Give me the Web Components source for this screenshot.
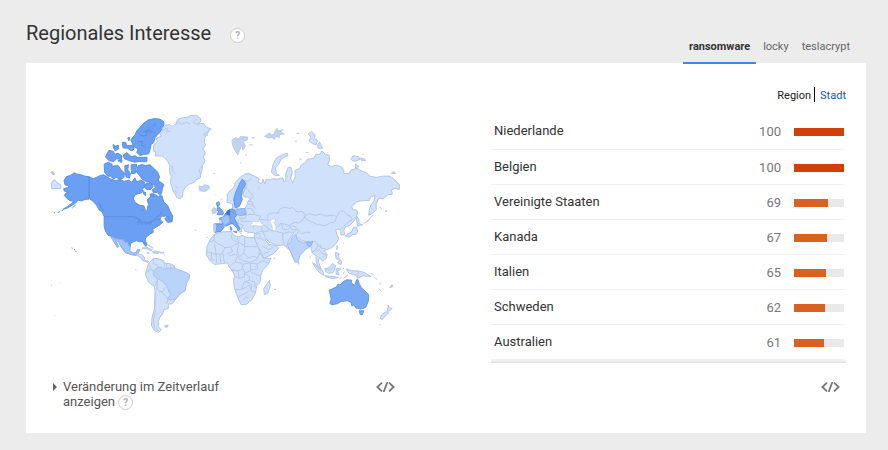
<!DOCTYPE html>
<html lang="de">
<head>
<meta charset="utf-8">
<title>Regionales Interesse</title>
<style>
body{margin:0;background:#ececec;font-family:Roboto,"Liberation Sans",sans-serif;color:#333}
</style>
</head>
<body>
<interest-panel>
  <span slot="title">Regionales Interesse</span>
  <term-tabs slot="tabs" terms="ransomware,locky,teslacrypt"></term-tabs>
  <world-map slot="map"></world-map>
  <timeline-toggle slot="map-tools">Veränderung im Zeitverlauf anzeigen</timeline-toggle>
  <embed-button slot="map-tools"></embed-button>
  <level-switch slot="list"></level-switch>
  <region-table slot="list" rows="Niederlande:100,Belgien:100,Vereinigte Staaten:69,Kanada:67,Italien:65,Schweden:62,Australien:61"></region-table>
  <embed-button slot="list-tools"></embed-button>
</interest-panel>

<template id="panel">
<style>
:host{display:block;padding:0 22px 17px 26px}
header{display:flex;justify-content:space-between;height:64px;margin-bottom:-1px}
.head{display:flex;align-items:center;gap:19px;height:66px}
h2{margin:0;font-size:20px;line-height:24px;font-weight:400;color:#333}
.head help-dot{margin-top:4px}
.card{background:#fff;padding:24px 20px 22px 24px;display:grid;grid-template-columns:351fr 355fr;column-gap:90px}
.col{display:flex;flex-direction:column;justify-content:space-between;min-width:0}
.map{padding-top:21px}
.tools{display:flex;justify-content:space-between;align-items:flex-start;min-height:32px;margin-top:16px;padding-right:6px}
.list-tools{justify-content:flex-end}
</style>
<header><div class="head"><h2><slot name="title"></slot></h2><help-dot></help-dot></div><slot name="tabs"></slot></header>
<div class="card">
  <section class="col"><div class="map"><slot name="map"></slot></div><div class="tools"><slot name="map-tools"></slot></div></section>
  <section class="col"><div><slot name="list"></slot></div><div class="tools list-tools"><slot name="list-tools"></slot></div></section>
</div>
</template>

<template id="map">
<style>
:host{display:block}
svg{display:block;width:100%;height:auto}
path{vector-effect:non-scaling-stroke;stroke-width:1;stroke-linejoin:round}
.l{fill:#d0e1fb;stroke:#b2c5e8}
.i{fill:#c2d3ef;stroke:#b9cae9}
.a{fill:#6a9ff4;stroke:#5b8fe2}
.n{fill:none;stroke:#b7c9e9}
.w{fill:#fff;stroke:#c3d2ed}
.k{fill:none;stroke:#5b8fe2}
.m{fill:#a1c2f8;stroke:#8aaee8}
.s{fill:#b9d3fa;stroke:#a9c1e9}
.e{fill:#79a8f5;stroke:#6796e3}
.d{fill:#3772dc;stroke:#3772dc}
</style>
<svg viewBox="0 0 1056 690" role="img" aria-label="Weltkarte des regionalen Interesses">
<g transform="translate(-15 -9)">
<path class="a" d="M57 228L64 216 76 212 88 204 96 208 108 210 120 214 133 216V283L120 284 110 289 100 286 92 295 80 302 67 310 54 314 68 305 80 296 86 289 76 288 66 281 58 272 63 265 70 262 58 259 56 252 68 248 73 244 60 240Z"/>
<path class="a" d="M133 216L145 222 156 217 166 212 177 210 189 218 198 223 213 227 228 224 238 230 252 226 262 233 270 219 276 232 288 226 297 230 301 237 298 247 292 255 297 259 287 265 273 269 265 280 270 292 283 301 297 303 302 315 307 321 309 305 312 299 307 286 318 276 316 268 332 270 341 276 352 273 357 292 369 302 375 317 384 334 383 348 375 347 369 340 364 333 358 335 350 334 346 345 334 344 323 350 309 354 299 352 291 348 278 341 268 336H178L172 322 163 316 157 304 146 291 133 281Z"/>
<path class="a" d="M178 336H268L278 341 291 348 299 352 309 354 323 350 334 344 346 345 354 352 348 359 335 367 324 374 326 383 316 388 304 398 301 406 307 420 303 425 297 418 294 410 285 412 275 408 265 412 258 416 257 424 251 422 248 413 239 412 235 405 218 403 204 396 190 392 182 380 178 364Z"/>
<path class="k" d="M272 341L285 346 286 355M279 361L280 350 290 352 292 360M297 354L307 356 301 361M309 358L317 354M322 350L316 360M297 315L288 318M330 340L345 332 352 322"/>
<path class="a" d="M275 201L280 183 292 179 302 182 316 180 327 190 339 202 345 218 340 226 358 240 353 250 351 264 346 273 339 262 326 264 323 255 333 248 326 239 317 239 313 230 300 229 291 222 285 213Z"/>
<path class="a" d="M178 178L190 172 202 178 201 184 220 182 228 194 239 205 237 219 225 224 215 218 205 222 198 214 188 214 179 202ZM240 183L251 180 249 195 257 206 254 220 244 216 241 202ZM259 180L276 178 272 205 260 207ZM299 247L306 234 320 236 325 245 318 254 307 255Z"/>
<path class="a" d="M272 88L276 78 285 68 298 54 310 45 328 41 345 42 357 50 358 59 351 75 340 88 331 98 327 113 319 119 316 134 312 147 297 149 286 152 276 143 280 132 267 125 262 113 258 105Z"/>
<path class="k" d="M278 77L286 90 296 94 306 91 304 76M315 65L308 79 322 84M333 54L325 65M279 110L295 111 289 120 303 126M295 82L316 76 329 83"/>
<path class="a" d="M232 113L242 112 247 122 264 121 268 132 261 138 248 130 235 129ZM205 126L221 121 221 132 211 138ZM182 156L192 137 205 139 210 148 220 145 231 153 230 164 215 162 207 170 193 168ZM236 150L246 143 259 155 272 153 279 158 307 157 306 171 283 170 270 172 252 167 238 161ZM249 99L255 97 252 108ZM219 168L232 165 230 173ZM296 262L302 262 302 273 298 269ZM317 268L327 267 325 277ZM360 342L370 334 372 344 383 351 369 353ZM205 118L211 125 206 129ZM165 296L172 310 177 317 169 314Z"/>
<path class="k" d="M27 324H30M38 323L45 321M50 318L55 316M80 430L83 431M87 434L90 436M91 438L94 442M82 310L92 301"/>
<path class="i" d="M17 202L24 200 30 208 22 209Z"/>
<path class="l" d="M19 235L28 224 36 233 48 240 47 252 34 251 20 252Z"/>
<path class="m" d="M204 397L218 403 235 405 239 412 248 413 251 422 257 424 255 438 265 446 274 443 278 435 286 435 281 445 274 447 273 453 258 450 241 444 233 433 221 413 208 399 222 426 218 430 203 404 199 398Z"/>
<path class="l" d="M273 451L279 448 292 450 298 459 300 467 313 471 308 474 293 467 284 456Z"/>
<path class="i" d="M292 431L304 427 323 436 319 439 307 433ZM323 441L330 439 346 442 341 447 325 445ZM307 444L314 445 308 447ZM347 443L357 443 357 445 348 446ZM308 420L322 428 325 431ZM357 449L361 452M271 494L275 498M18 542L21 543M42 534L44 535M29 633L31 634"/>
<path class="l" d="M311 478L326 461 340 462 354 467 362 476 378 478 389 484 391 492 405 497 423 504 435 511 433 524 425 537 422 558 410 566 401 574 394 583 383 598 371 599 371 612 358 616 353 630 346 638 341 650 341 667 350 677 342 684 329 679 320 663 322 640 327 621 331 602 331 558 329 546 313 534 303 513 303 504Z"/>
<path class="s" d="M328 498L340 488 350 488 355 496 366 490 378 493 388 487 391 492 405 497 423 504 435 511 433 524 425 537 422 558 410 566 401 574 394 583 378 587 368 582 378 571 372 561 369 548 352 529 340 523 327 514Z"/>
<path class="n" d="M326 462L326 477 337 481 340 488M303 504L313 500 314 494 328 501M311 478L326 501M331 557L337 550 338 523M337 551L344 562 357 560 359 551 369 549M333 562L329 592 331 625 326 648 330 670 343 680M346 560L366 576 370 584 366 598M355 467L361 481 356 490M366 477V490M378 478V492M329 546L340 524"/>
<path class="i" d="M360 664L371 662 367 669 361 668Z"/>
</g>
<g transform="translate(270 -9)">
<path class="l" d="M42 120L53 111 49 101 65 94 60 86 70 78 67 70 76 62 89 59 99 64 109 56 114 44 128 38 143 37 154 31 171 31 183 40 184 49 177 54 193 56 200 67 215 72 207 80 202 91 196 97 194 113 199 120 190 132 198 145 191 156 197 169 188 183 188 195 182 210 183 219 169 225 164 233 149 238 137 247 130 260 129 274 122 282 111 278 106 266 99 257 97 245 92 234 95 216 89 197 91 184 84 169 78 161 66 153 46 153 49 142 41 139Z"/>
<path class="n" d="M68 76L83 69 81 82 92 78M108 58L119 51 126 60 140 51 151 58M171 41L161 53 180 60M209 76L190 90 205 91M90 183L100 187 98 198 108 207M106 242L115 250M188 184L178 195 184 210M99 256L113 263"/>
<path class="i" d="M178 244L188 246 195 240 208 243 210 250 197 260 181 258ZM278 105L288 98 300 103 302 95 324 96 325 104 311 110 318 124 310 135 306 120 301 134 295 150 285 134 279 121ZM337 99L346 98M329 120H339M302 174H306M222 206H227M242 286L248 281M228 270L230 272M318 150H323"/>
</g>
<path class="l" d="M533 261L543 247 552 241 558 224 570 210 586 199 597 196 617 206 630 213 626 223 637 228 640 213 647 229 651 214 663 216 670 213 686 214 700 210 704 222 710 219 709 199 717 178 726 180 729 195 724 211 730 226 738 207 737 188 751 182 756 171 768 165 775 154 794 151 800 139 811 140 818 129 829 140 840 142 840 160 835 171 845 176 862 172 878 178 884 188 884 197 899 198 905 187 923 181 939 190 952 194 962 205 982 209 1001 205 1023 205 1038 217 1052 232 1050 246 1038 241 1027 246 1030 259 1016 261 1005 272 989 272 981 289 982 305 970 317 959 323 961 304 968 287 975 279 978 263 964 268 961 278 940 279 924 281 908 297 911 306 924 308 925 319 917 337 902 353 889 358 884 368 887 381 875 382 875 370 869 364 860 366 862 379 869 391 862 407 848 420 832 427 825 429 834 442 830 454 820 461 811 449 807 461 816 486 807 478 801 463 800 444 789 436 784 415 770 421 759 433 751 445 746 463 738 464 729 446 724 430 713 421 703 412 683 414 669 407 658 403 650 393 647 397 659 411 673 412 688 421 676 436 651 449 642 451 636 435 624 413 617 399 614 386 616 376 600 374 586 371 583 362 575 359 577 373 568 370 562 357 551 348 542 349 532 354 524 358 514 371 496 373 493 366 494 349 512 347 510 333 524 325 534 313 548 305 550 291 556 285 557 299 569 305 587 302 593 290 596 279 605 274 595 268 584 268 581 257 590 235 576 264 572 287 563 298 552 299 547 287 533 284Z"/>
<path class="w" d="M604 351L612 340 624 343 633 338 635 346 645 352 634 356 618 354 608 356ZM661 342L668 333 681 336 674 345 681 358 678 371 669 369 668 355ZM624 238L632 237 629 246Z"/>
<path class="l" d="M496 379L518 373 545 371 552 382 568 388 577 383 591 389 614 390 625 416 635 440 642 452 665 452 657 469 638 490 634 506 632 525 622 535 618 556 607 577 592 590 575 592 567 576 555 543 552 519 555 505 548 488 539 479 534 466 519 468 494 471 480 457 471 443 472 418 481 397ZM660 519L663 534 655 558 645 561 643 544 652 530Z"/>
<path class="n" d="M496 380L492 398 479 404M492 399L505 408 527 420 545 418 568 405 563 389M527 420L517 439 500 440 495 409M545 381L549 397 568 405 586 414 586 389M586 414L583 437 570 447 563 432 568 406M586 417H624M584 436L595 451 614 446 624 452 630 438M472 433L486 435 500 441 501 467M486 435L485 453M511 441L514 467M520 438L525 466M537 445L558 440 564 447 557 463 540 477M564 447L579 459 602 464 624 455M558 464L577 467 581 484 563 490 546 486M581 470L602 466 604 488 587 497 580 484M604 467L622 469 625 484 606 487M622 470L639 460 657 467M555 507L571 512 586 507 584 494M587 498L601 508 598 520 585 522 575 547 556 545M602 492L617 500 633 505M600 519L616 524 617 540M575 546L589 540 600 532 604 544 590 557 568 567M588 521L606 530 606 551 618 555M582 577L591 568 597 573M545 420L549 432 532 439M624 434L637 443 642 450M480 457H494M546 488L566 489 569 514"/>
<path class="n" d="M562 295L563 270 571 241 589 216 597 221 605 211M588 218L593 234M588 236L612 267 605 273M596 281L607 281 612 291M595 290L611 292 617 303M587 302L592 321 612 320 634 326 627 338M592 320L587 333 573 332 576 341 606 341M571 330L565 346 582 353 577 360M583 304L606 302 616 320M631 335L655 338M643 352L658 362 654 372 633 371 615 378M633 356L640 369 647 388 658 401M615 390L631 391 645 399M618 382L628 376 633 388M655 365L668 369 678 371 701 376 700 394 705 411M657 340L654 322 665 316 687 316 690 305 704 298 721 302 731 299 743 313 759 311 768 323 763 334 748 346 735 344 720 353 694 347 684 359M696 348L701 365 715 366 728 354 744 361M701 378L717 373 733 374 744 365 758 378 769 374 784 374M712 413L720 394 733 377M768 323L782 318 797 323 817 319 829 325 850 322 863 327 857 342 840 347 829 354 804 351 787 342 774 337 765 324M864 326L871 311 884 309 891 320 903 325 910 337 899 341 886 355M884 356L873 365M746 372L741 386 757 398 779 404 786 411M786 407L795 401 807 410 801 425 789 434M804 411L817 422 831 424M801 430L810 426 819 438 831 443M817 424L813 410M610 360L613 352M640 416L655 426 673 420M643 438L659 432M719 353L727 366 745 365"/>
<path class="e" d="M555 292L553 274 559 253 568 232 578 214 586 221 588 231 579 246 575 266 579 275 569 296 559 300Z"/>
<path class="e" d="M500 286L507 282 512 289 506 296 514 304 522 314 520 321 503 321 507 311 501 306 505 299ZM494 349L517 349 524 358 514 371 496 374 498 354ZM508 332L520 330 528 317 540 322 540 343 548 347 532 354 518 349 519 338ZM539 305L550 304 558 309 561 323 554 331 561 343 572 365 566 370 562 360 545 344 539 332ZM543 356L547 363 545 369 542 361ZM552 371L562 371 561 376Z"/>
<path class="m" d="M561 305L585 302 589 321 570 324 558 316ZM527 324L538 323 541 343 524 353 514 332Z"/>
<path class="d" d="M529 318L534 309 541 307 540 322Z"/>
<path class="i" d="M487 307L493 299 501 304 499 315 489 318ZM493 349L498 351 498 371 493 371ZM594 375H600M569 376L577 377M435 367L440 369M470 389H475M674 546H680M671 452H678"/>
<path class="s" d="M714 412L725 403 727 392 740 381 744 397 762 406 784 403 787 411 779 420 769 426 752 444 746 462 738 464 726 437Z"/>
<path class="m" d="M773 403L786 404 790 400 787 411 780 418 773 410Z"/>
<g transform="translate(630 -9)">
<path class="l" d="M84 145L86 152 65 163 58 178 48 190 51 207 60 212 45 211 36 202 41 180 50 160 70 149ZM147 87L157 79 168 90 166 100 175 107 171 119 161 117 149 108 155 97ZM175 121L181 111 190 130 177 130ZM275 163L282 153 298 155 303 163 288 169 279 167ZM290 178L299 185 289 190Z"/>
<path class="i" d="M16 94L31 84 37 90 43 89 47 78 53 70 58 79 70 74 64 82 75 87 60 89 60 98 52 94 45 103 38 98 26 99ZM113 86L119 85M106 109H113M120 163H127M139 143H147M304 160L314 160 320 167 307 168ZM397 206L404 199 410 206ZM361 307L369 312M309 149L314 148"/>
<path class="e" d="M379 319H384"/>
</g>
<g transform="translate(660 276)">
<path class="l" d="M228 109L236 102 247 98 253 83 261 82 266 94 261 104 249 105 241 113ZM263 65L262 48 269 57 270 72 281 75 265 80ZM130 190L142 197 160 213 164 227 153 222 141 208ZM166 228L180 230 196 232 207 234 190 237 169 232ZM167 207L179 205 190 192 200 199 192 219 177 221 169 216ZM231 208L247 214 265 214 284 218 306 231 297 230 281 229 267 236 255 225 240 222ZM199 158L210 163 207 172 218 187 215 195 205 190 211 183 200 176ZM201 207L216 208 205 215 210 225 201 224Z"/>
<path class="i" d="M204 137L206 145 202 150ZM222 130L225 132M87 187L91 191 87 194ZM121 170L124 177M212 237L218 234M222 223L226 216M222 209L224 205M306 221L314 226M316 233L325 240M330 251L338 255M362 264L369 255 372 261 365 264ZM329 268L338 276M284 72L296 65 311 47M222 237L235 228M15 270L20 268M330 375L334 377"/>
<path class="n" d="M267 214L266 236M170 207L183 212 194 202M132 190L155 214"/>
<path class="e" d="M180 272L188 269 202 262 206 254 213 257 221 247 232 241 248 242 246 250 257 258 262 241 266 240 271 254 276 264 288 275 299 286 298 304 290 324 275 329 261 326 254 316 248 320 246 309 235 304 216 306 204 313 187 316 182 312 186 299ZM270 334L284 334 279 347 273 344Z"/>
<path class="l" d="M357 316L361 325 369 327 361 335 354 335 357 325ZM352 336L359 340 348 351 340 360 333 357 338 346Z"/>
</g>
</svg>
</template>

<script>
class Base extends HTMLElement {
  connectedCallback() {
    if (this.shadowRoot) return;
    this.attachShadow({ mode: 'open' });
    this.render();
  }
}

customElements.define('interest-panel', class extends Base {
  render() { this.shadowRoot.append(document.getElementById('panel').content.cloneNode(true)); }
});

customElements.define('world-map', class extends Base {
  render() { this.shadowRoot.append(document.getElementById('map').content.cloneNode(true)); }
});

customElements.define('help-dot', class extends Base {
  render() {
    this.shadowRoot.innerHTML = `<style>
:host{display:inline-block;vertical-align:middle}
button{display:grid;place-items:center;box-sizing:border-box;width:15px;height:15px;margin:0;padding:0;border:1px solid #ccc;border-radius:50%;background:#fff;color:#b3b3b3;font:700 10px/13px Roboto,sans-serif}
</style><button type="button" aria-label="Hilfe">?</button>`;
  }
});

customElements.define('term-tabs', class extends Base {
  render() {
    const tabs = this.getAttribute('terms').split(',').map((t, i) =>
      `<button type="button" role="tab" aria-selected="${i === 0}">${t}</button>`).join('');
    this.shadowRoot.innerHTML = `<style>
:host{display:block;padding-right:10px}
div{display:flex;gap:1px;height:100%;align-items:flex-end}
button{margin:0;padding:0 6px 8px;border:0;border-bottom:2px solid transparent;background:none;font:400 11px/14px Roboto,sans-serif;color:#666}
button[aria-selected=true]{font-weight:700;color:#333;border-color:#4285f4}
</style><div role="tablist">${tabs}</div>`;
  }
});

customElements.define('level-switch', class extends Base {
  render() {
    this.shadowRoot.innerHTML = `<style>
:host{display:flex;justify-content:flex-end;font-size:11px;line-height:14px;height:27px}
span,a{height:13px;padding-top:2px}
span{padding-right:3px;border-right:1px solid #000;color:#222}
a{padding-left:5px;color:#15c;text-decoration:none}
</style><span aria-current="true">Region</span><a href="#stadt">Stadt</a>`;
  }
});

customElements.define('region-table', class extends Base {
  render() {
    const rows = this.getAttribute('rows').split(',').map(r => {
      const [name, value] = r.split(':');
      const width = Math.floor(value / 2) * 2;
      return `<tr><th scope="row">${name}</th><td>${value}</td><td><div class="bar"><div class="${value === '100' ? 'top' : ''}" style="width:${width}%"></div></div></td></tr>`;
    }).join('');
    this.shadowRoot.innerHTML = `<style>
:host{display:block}
:host::after{content:"";display:block;height:3px;background:linear-gradient(#f6f6f6,#e0e0e0)}
table{width:calc(100% - 2px);border-collapse:separate;border-spacing:0;font-size:13px;line-height:16px}
th,td{box-sizing:border-box;height:35px;padding:2px 0 0;border-bottom:1px solid #f0f0f0;font-weight:400}
th{padding:0 0 0 3px;text-align:left;color:#333}
td{text-align:right;color:#777}
td:last-child{width:63px;padding-left:13px}
tr:first-child>*{height:36px;padding-bottom:2px}
.bar{height:8px;background:#e9e9e9}
.bar div{height:8px;background:#db611e}
.bar .top{background:#d14009}
</style><table><tbody>${rows}</tbody></table>`;
  }
});

customElements.define('timeline-toggle', class extends Base {
  render() {
    this.shadowRoot.innerHTML = `<style>
:host{display:flex;max-width:190px;font-size:13px;line-height:15px;color:#555;padding-left:3px}
button{display:flex;align-items:flex-start;gap:6px;margin:0;padding:0;border:0;background:none;font:inherit;color:inherit;text-align:left}
svg{flex:none;margin-top:4px}
</style><button type="button" aria-expanded="false"><svg width="4" height="8" viewBox="0 0 4 8"><path d="M0 0L4 4 0 8Z" fill="#666"/></svg><span><slot></slot> <help-mark></help-mark></span></button>`;
  }
});

customElements.define('help-mark', class extends Base {
  render() {
    this.shadowRoot.innerHTML = `<style>
:host{display:inline-grid;place-items:center;box-sizing:border-box;width:15px;height:15px;vertical-align:middle;border:1px solid #ccc;border-radius:50%;color:#b3b3b3;font:700 10px/13px Roboto,sans-serif}
</style>?`;
  }
});

customElements.define('embed-button', class extends Base {
  render() {
    this.shadowRoot.innerHTML = `<style>
:host{display:block}
button{display:block;margin:0;padding:3px 0 0;border:0;background:none}
svg{display:block}
</style><button type="button" aria-label="Einbetten"><svg width="19" height="10" viewBox="0 0 19 10" fill="none" stroke="#777" stroke-width="1.8"><path d="M6 .7L1.4 5 6 9.3M13 .7L17.6 5 13 9.3M11.4 0L7.6 10"/></svg></button>`;
  }
});
</script>
</body>
</html>
